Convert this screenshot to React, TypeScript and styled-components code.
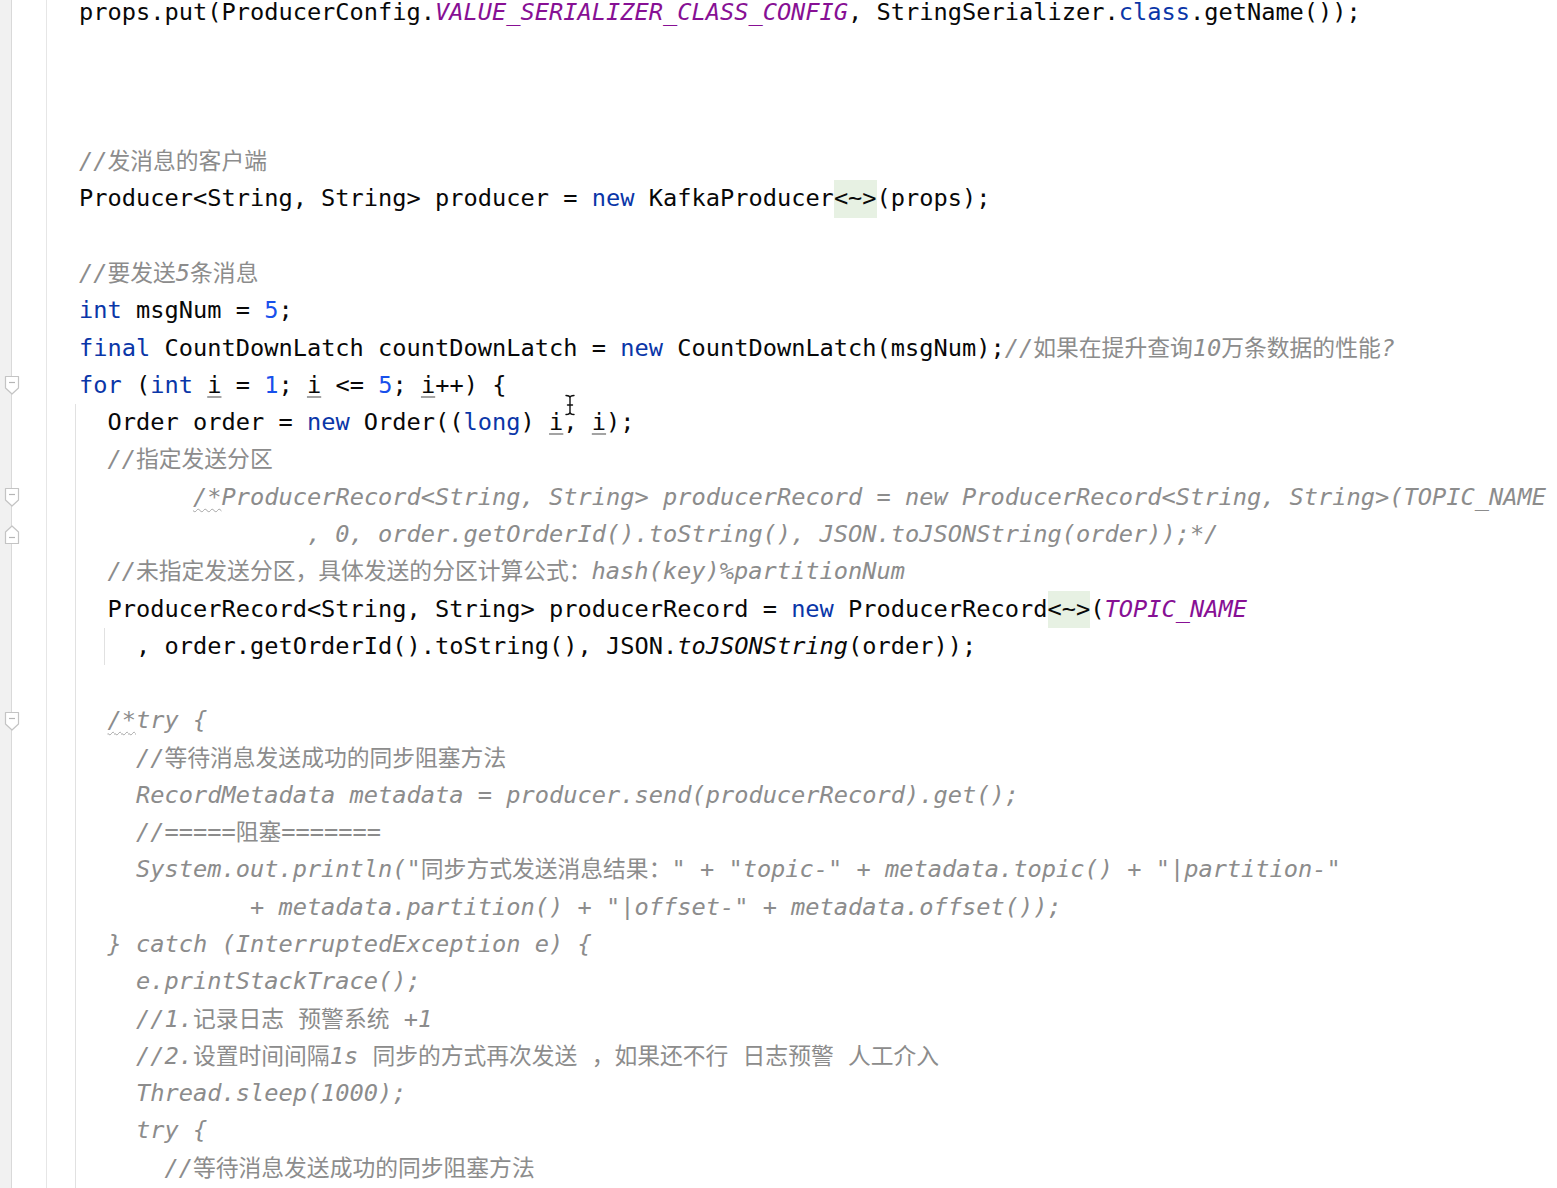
import React from "react";
import styled, { createGlobalStyle, css } from "styled-components";

const GlobalStyle = createGlobalStyle`
  html, body { margin: 0; padding: 0; background: #ffffff; }
  body { overflow: hidden; }
`;

type Kind = "p" | "k" | "n" | "c" | "i" | "cm" | "u" | "f" | "w";
type Tok = [Kind, string];
type LineData = { toks: Tok[]; fold?: "down" | "up"; guides?: number[] };

const LINE_H = 37.29;

const Root = styled.div`
  position: relative;
  width: 1557px;
  height: 1188px;
  overflow: hidden;
  background: #ffffff;
`;

const Editor = styled.div`
  display: flex;
  flex-direction: column;
  margin-top: -6px;
`;

const Row = styled.div`
  display: grid;
  grid-template-columns: 23px 24px minmax(0, 1fr);
  height: ${LINE_H}px;
`;

const FoldCell = styled.div`
  display: flex;
  align-items: center;
  justify-content: center;
  background: linear-gradient(
    to right,
    #f1f1f1 0,
    #f1f1f1 11px,
    #d9d9d9 11px,
    #d9d9d9 12px,
    #ffffff 12px
  );
`;

const GapCell = styled.div`
  border-right: 1px solid #e6e6e6;
  background: #ffffff;
`;

const Code = styled.div<{ $guides?: number[] }>`
  padding-left: 32px;
  white-space: pre;
  font-family: "DejaVu Sans Mono", "Noto Sans CJK SC", monospace;
  font-size: 23.67px;
  line-height: ${LINE_H}px;
  color: #080808;
  ${({ $guides }) =>
    $guides && $guides.length
      ? css`
          background-image: ${$guides.map(() => "linear-gradient(#e1e1e1, #e1e1e1)").join(", ")};
          background-size: 1px 100%;
          background-repeat: no-repeat;
          background-position: ${$guides.map((g) => `${g}px 0`).join(", ")};
        `
      : ""}
`;

const Keyword = styled.span`
  color: #0a36a8;
`;

const NumberLit = styled.span`
  color: #1750eb;
`;

const Constant = styled.span`
  color: #871094;
  font-style: italic;
`;

const StaticCall = styled.span`
  font-style: italic;
`;

const Comment = styled.span`
  color: #8c8c8c;
  font-style: italic;
`;

const Han = styled.span`
  font-style: normal;
  font-size: 0.963em;
`;

const Reassigned = styled.span`
  text-decoration: underline;
  text-decoration-color: #a3a3a3;
  text-decoration-thickness: 2px;
  text-underline-offset: 3px;
`;

const Folded = styled.span`
  display: inline-block;
  vertical-align: top;
  line-height: ${LINE_H}px;
  background: #e7f1e3;
`;

const Wavy = styled.span`
  color: #8c8c8c;
  font-style: italic;
  text-decoration: underline wavy #a5a5a5;
  text-decoration-thickness: 1px;
  text-underline-offset: 3px;
`;

const MouseCursor = styled.svg`
  position: absolute;
  left: 564px;
  top: 394px;
  pointer-events: none;
`;

const hanRe = /([\u3000-\u303f\u4e00-\u9fff\uff00-\uffef]+)/;

function withHan(text: string) {
  return text.split(hanRe).map((part, i) =>
    hanRe.test(part) ? <Han key={i}>{part}</Han> : <React.Fragment key={i}>{part}</React.Fragment>
  );
}

function FoldMarker({ dir }: { dir: "down" | "up" }) {
  const d =
    dir === "down"
      ? "M1.5 1.5 H14.5 V13 L8 19 L1.5 13 Z"
      : "M1.5 18.5 H14.5 V7 L8 1 L1.5 7 Z";
  const my = dir === "down" ? 7.5 : 12.5;
  return (
    <svg width="16" height="20" viewBox="0 0 16 20">
      <path d={d} fill="#ffffff" stroke="#c4c4c4" strokeWidth="1.2" strokeLinejoin="round" />
      <line x1="5" y1={my} x2="11" y2={my} stroke="#b5b5b5" strokeWidth="1.2" />
    </svg>
  );
}

function Token({ tok }: { tok: Tok }) {
  const [kind, text] = tok;
  switch (kind) {
    case "k":
      return <Keyword>{text}</Keyword>;
    case "n":
      return <NumberLit>{text}</NumberLit>;
    case "c":
      return <Constant>{text}</Constant>;
    case "i":
      return <StaticCall>{text}</StaticCall>;
    case "cm":
      return <Comment>{withHan(text)}</Comment>;
    case "u":
      return <Reassigned>{text}</Reassigned>;
    case "f":
      return <Folded>{text}</Folded>;
    case "w":
      return <Wavy>{text}</Wavy>;
    default:
      return <>{text}</>;
  }
}

const G1 = [28];

const lines: LineData[] = [
  {
    toks: [
      ["p", "props.put(ProducerConfig."],
      ["c", "VALUE_SERIALIZER_CLASS_CONFIG"],
      ["p", ", StringSerializer."],
      ["k", "class"],
      ["p", ".getName());"],
    ],
  },
  { toks: [] },
  { toks: [] },
  { toks: [] },
  { toks: [["cm", "//发消息的客户端"]] },
  {
    toks: [
      ["p", "Producer<String, String> producer = "],
      ["k", "new"],
      ["p", " KafkaProducer"],
      ["f", "<~>"],
      ["p", "(props);"],
    ],
  },
  { toks: [] },
  { toks: [["cm", "//要发送5条消息"]] },
  {
    toks: [
      ["k", "int"],
      ["p", " msgNum = "],
      ["n", "5"],
      ["p", ";"],
    ],
  },
  {
    toks: [
      ["k", "final"],
      ["p", " CountDownLatch countDownLatch = "],
      ["k", "new"],
      ["p", " CountDownLatch(msgNum);"],
      ["cm", "//如果在提升查询10万条数据的性能?"],
    ],
  },
  {
    fold: "down",
    toks: [
      ["k", "for"],
      ["p", " ("],
      ["k", "int"],
      ["p", " "],
      ["u", "i"],
      ["p", " = "],
      ["n", "1"],
      ["p", "; "],
      ["u", "i"],
      ["p", " <= "],
      ["n", "5"],
      ["p", "; "],
      ["u", "i"],
      ["p", "++) {"],
    ],
  },
  {
    guides: G1,
    toks: [
      ["p", "  Order order = "],
      ["k", "new"],
      ["p", " Order(("],
      ["k", "long"],
      ["p", ") "],
      ["u", "i"],
      ["p", ", "],
      ["u", "i"],
      ["p", ");"],
    ],
  },
  { guides: G1, toks: [["cm", "  //指定发送分区"]] },
  {
    guides: G1,
    fold: "down",
    toks: [
      ["p", "        "],
      ["w", "/*"],
      ["cm", "ProducerRecord<String, String> producerRecord = new ProducerRecord<String, String>(TOPIC_NAME"],
    ],
  },
  {
    guides: G1,
    fold: "up",
    toks: [["cm", "                , 0, order.getOrderId().toString(), JSON.toJSONString(order));*/"]],
  },
  {
    guides: G1,
    toks: [["cm", "  //未指定发送分区，具体发送的分区计算公式：hash(key)%partitionNum"]],
  },
  {
    guides: G1,
    toks: [
      ["p", "  ProducerRecord<String, String> producerRecord = "],
      ["k", "new"],
      ["p", " ProducerRecord"],
      ["f", "<~>"],
      ["p", "("],
      ["c", "TOPIC_NAME"],
    ],
  },
  {
    guides: [28, 57],
    toks: [
      ["p", "    , order.getOrderId().toString(), JSON."],
      ["i", "toJSONString"],
      ["p", "(order));"],
    ],
  },
  { guides: G1, toks: [] },
  {
    guides: G1,
    fold: "down",
    toks: [
      ["p", "  "],
      ["w", "/*"],
      ["cm", "try {"],
    ],
  },
  { guides: G1, toks: [["cm", "    //等待消息发送成功的同步阻塞方法"]] },
  { guides: G1, toks: [["cm", "    RecordMetadata metadata = producer.send(producerRecord).get();"]] },
  { guides: G1, toks: [["cm", "    //=====阻塞======="]] },
  {
    guides: G1,
    toks: [["cm", '    System.out.println("同步方式发送消息结果：" + "topic-" + metadata.topic() + "|partition-"']],
  },
  {
    guides: G1,
    toks: [["cm", '            + metadata.partition() + "|offset-" + metadata.offset());']],
  },
  { guides: G1, toks: [["cm", "  } catch (InterruptedException e) {"]] },
  { guides: G1, toks: [["cm", "    e.printStackTrace();"]] },
  { guides: G1, toks: [["cm", "    //1.记录日志 预警系统 +1"]] },
  {
    guides: G1,
    toks: [["cm", "    //2.设置时间间隔1s 同步的方式再次发送 ，如果还不行 日志预警 人工介入"]],
  },
  { guides: G1, toks: [["cm", "    Thread.sleep(1000);"]] },
  { guides: G1, toks: [["cm", "    try {"]] },
  { guides: G1, toks: [["cm", "      //等待消息发送成功的同步阻塞方法"]] },
  { guides: G1, toks: [] },
];

export default function App() {
  return (
    <Root>
      <GlobalStyle />
      <Editor>
        {lines.map((line, idx) => (
          <Row key={idx}>
            <FoldCell>{line.fold ? <FoldMarker dir={line.fold} /> : null}</FoldCell>
            <GapCell />
            <Code $guides={line.guides}>
              {line.toks.length === 0
                ? " "
                : line.toks.map((t, j) => <Token key={j} tok={t} />)}
            </Code>
          </Row>
        ))}
      </Editor>
      <MouseCursor width="12" height="22" viewBox="0 0 12 22">
        <path
          d="M2 1.5 Q6 1.5 6 4 Q6 1.5 10 1.5 M6 4 V18 M2 20.5 Q6 20.5 6 18 Q6 20.5 10 20.5 M3.5 11 H8.5"
          fill="none"
          stroke="#ffffff"
          strokeWidth="3"
          strokeLinecap="round"
        />
        <path
          d="M2 1.5 Q6 1.5 6 4 Q6 1.5 10 1.5 M6 4 V18 M2 20.5 Q6 20.5 6 18 Q6 20.5 10 20.5 M3.5 11 H8.5"
          fill="none"
          stroke="#111111"
          strokeWidth="1.4"
          strokeLinecap="round"
        />
      </MouseCursor>
    </Root>
  );
}
